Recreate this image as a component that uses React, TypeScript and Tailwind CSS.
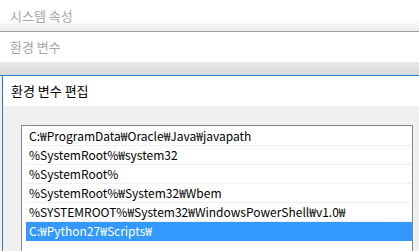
import React from "react";

const paths = [
  "C:₩ProgramData₩Oracle₩Java₩javapath",
  "%SystemRoot%₩system32",
  "%SystemRoot%",
  "%SystemRoot%₩System32₩Wbem",
  "%SYSTEMROOT%₩System32₩WindowsPowerShell₩v1.0₩",
  "C:₩Python27₩Scripts₩",
];

const font = { fontFamily: '"Noto Sans CJK KR", "Noto Sans", sans-serif' };

export default function App() {
  return (
    <div className="w-[419px] h-[251px] overflow-hidden bg-[#f0f0f0] text-[12px]" style={font}>
      {/* System properties title */}
      <div className="h-[32px] border-b border-[#a0a0a0] bg-gradient-to-b from-white from-60% to-[#ececec] flex items-center pl-[10px] text-[13px] text-[#a6a6a6]">
        시스템 속성
      </div>

      {/* Env vars title */}
      <div className="bg-white">
        <div className="h-[30px] flex items-center pl-[10px] text-[13px] text-[#a6a6a6]">환경 변수</div>
        <div className="h-[14px] border-b border-[#2b7bd0] bg-gradient-to-b from-[#e8e8e8] to-[#d9d9d9]" />
      </div>

      {/* Edit dialog */}
      <div className="ml-[2px] border-l border-[#2b7bd0] h-full bg-[#f0f0f0]">
        <div className="h-[30px] bg-white flex items-center pl-[8px] text-[13px] text-black">환경 변수 편집</div>
        <div className="pt-[19px] pl-[18px]">
          <div className="w-[392px] border border-[#828790] bg-white pl-[4px] pt-[1px] h-[200px]">
            {paths.map((p, i) => {
              const sel = i === paths.length - 1;
              return (
                <div
                  key={p}
                  className={
                    sel
                      ? "h-[19px] bg-[#3399ff] text-white flex items-center pl-[3px] border-b border-[#3399ff]"
                      : "h-[19px] border-b border-[#f0f0f0] flex items-center pl-[3px] text-black"
                  }
                >
                  {p}
                </div>
              );
            })}
          </div>
        </div>
      </div>
    </div>
  );
}
